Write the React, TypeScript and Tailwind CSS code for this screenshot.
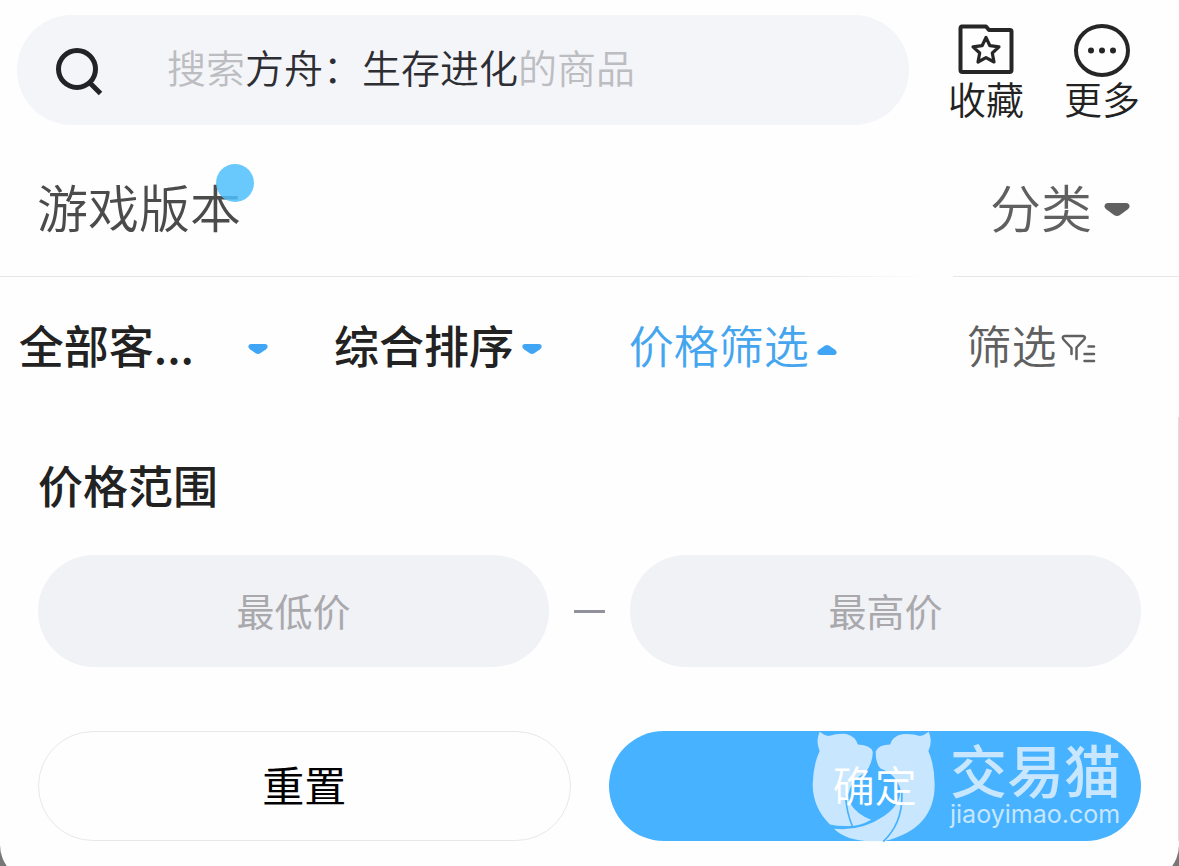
import React from "react";

function Caret({ up = false, className }: { up?: boolean; className: string }) {
  return (
    <svg viewBox="0 0 26 14" className={className} aria-hidden="true">
      <path
        fill="currentColor"
        transform={up ? "rotate(180 13 7)" : undefined}
        d="M4 0H22Q25.500 0 25.500 3.500Q25.500 5 23.500 6.600L16 12Q13 14 10 12L2.500 6.600Q.5 5 .5 3.500Q.5 0 4 0Z"
      />
    </svg>
  );
}

function SearchIcon() {
  return (
    <svg viewBox="0 0 48 50" className="h-[50px] w-12" fill="none" stroke="#202327" strokeWidth="5" aria-hidden="true">
      <circle cx="22" cy="22" r="18.500" />
      <path d="M35 36L45.500 46.500" />
    </svg>
  );
}

function FavoriteIcon() {
  return (
    <svg viewBox="0 0 58 52" className="h-[52px] w-[58px]" fill="none" stroke="#262626" strokeLinejoin="round" aria-hidden="true">
      <path strokeWidth="4" d="M4.500 3.500H29L32 7H53Q54.500 7 54.500 8.500V47Q54.500 49 52.500 49H5.500Q3.500 49 3.500 47V5.500Q3.500 3.500 5.500 3.500Z" />
      <path strokeWidth="3.200" d="M29 14.500L32.900 22.700L42 23.800L35.300 30L37 39L29 34.600L21 39L22.700 30L16 23.800L25.100 22.700Z" />
    </svg>
  );
}

function MoreIcon() {
  return (
    <svg viewBox="0 0 58 54" className="-mb-[2px] h-[54px] w-[58px]" aria-hidden="true">
      <ellipse cx="29" cy="27.500" rx="26" ry="24.500" fill="none" stroke="#262626" strokeWidth="4" />
      <g fill="#262626">
        <circle cx="18" cy="27.500" r="3" />
        <circle cx="29" cy="27.500" r="3" />
        <circle cx="40" cy="27.500" r="3" />
      </g>
    </svg>
  );
}

function FunnelIcon() {
  return (
    <svg viewBox="0 0 36 30" className="mt-2 h-[30px] w-9" fill="none" stroke="currentColor" strokeWidth="2.500" strokeLinecap="round" strokeLinejoin="round" aria-hidden="true">
      <path d="M10.500 20V14L2.500 5.500Q.5 2 4 2H21Q25 2 23.500 5L15.500 13.500V25" />
      <path d="M27.500 12.500H33M23.500 20H33M23.500 27H33" />
    </svg>
  );
}

function CatLogo() {
  return (
    <svg viewBox="22 26 370 332" className="h-[111px] w-[123px]" aria-hidden="true">
      <g fill="#c8e7ff">
        <path d="M45 27Q58 38 72 40Q100 32 125 34Q152 40 160 66Q200 68 205 88Q204 125 182 150Q140 172 131 215Q130 228 134 238Q155 276 200 292Q165 312 130 311Q100 312 76 306Q24 255 24 185Q26 125 45 85Q32 55 45 27Z" />
        <path d="M373 27Q360 38 347 40Q320 32 293 35Q265 40 257 66Q222 66 214 86Q212 120 228 138Q275 155 288 200Q290 245 240 280Q170 328 88 319Q125 355 200 357L240 356Q392 320 391 185Q390 125 372 85Q386 55 373 27Z" />
      </g>
      <g fill="none" stroke="#47b2ff" strokeWidth="5">
        <path d="M123 222Q126 270 144 313" />
        <path d="M292 205Q298 300 236 358" />
      </g>
    </svg>
  );
}

function PriceInput({ label }: { label: string }) {
  return (
    <input
      aria-label={label}
      inputMode="numeric"
      placeholder={label}
      className="h-28 min-w-0 flex-1 rounded-full bg-[#f1f2f6] pb-1 text-center text-[38px] text-[#333] outline-none placeholder:text-[#a9a9ad]"
    />
  );
}

export default function App() {
  return (
    <div className="h-screen overflow-hidden bg-[#777] font-['Noto_Sans_CJK_SC',sans-serif]">
      <main className="rounded-b-[36px] bg-[#fefefe] pb-10">
        <header className="flex items-start pt-[15px] pr-[39px] pl-[17px]">
          <div className="grid h-[110px] flex-1 grid-cols-[150px_1fr] items-center rounded-full bg-[#f4f5f9]">
            <label htmlFor="search" className="pt-1 pl-[38px]" aria-label="搜索">
              <SearchIcon />
            </label>
            <input id="search" type="search" className="col-start-2 row-start-1 h-full min-w-0 rounded-full bg-transparent text-[39px] outline-none" />
            <span className="pointer-events-none col-start-2 row-start-1 pb-2 text-[39px] leading-[56px] font-[350] whitespace-nowrap text-[#bcbdc1]">
              搜索<span className="text-[#2d2e33]">方舟：生存进化</span>的商品
            </span>
          </div>
          <nav className="flex gap-10 pt-2 pl-[39px] text-[38px] leading-[46px] font-[350] text-[#222]">
            <button className="flex flex-col items-center"><FavoriteIcon />收藏</button>
            <button className="flex flex-col items-center"><MoreIcon />更多</button>
          </nav>
        </header>

        <div className="flex items-center justify-between pt-[47px] pr-[49px] pb-9 pl-[37px] text-[51px] leading-[68px] font-[350]">
          <button className="relative text-[#4b4b4b]">
            游戏版本
            <span className="absolute -top-2 -right-[13px] size-[38px] rounded-full bg-[#4fc0fd]/85" />
          </button>
          <button className="flex items-center gap-3 text-[#606060]">
            分类
            <Caret className="mt-2 h-[14px] w-[26px]" />
          </button>
        </div>

        <div className="flex gap-6">
          <div className="h-px flex-1 bg-linear-to-r from-[#e6e6e6] from-85% to-transparent" />
          <div className="h-px w-[226px] bg-[#e6e6e6]" />
        </div>

        <nav className="grid h-[140px] grid-cols-4 text-[45px] leading-[60px] font-[350] whitespace-nowrap">
          <button className="flex items-center justify-center gap-[54px] pr-2 pb-1 font-medium text-[#222]">
            全部客...
            <Caret className="mt-2 h-[11px] w-5 text-[#40a5f5]" />
          </button>
          <button className="flex items-center justify-center gap-2 pr-2 pb-1 font-medium text-[#222]">
            综合排序
            <Caret className="mt-2 h-[11px] w-5 text-[#40a5f5]" />
          </button>
          <button aria-expanded="true" className="flex items-center justify-center gap-2 pr-2 pb-1 text-[#45a5ee]">
            价格筛选
            <Caret up className="mt-2 h-[11px] w-5 text-[#40a5f5]" />
          </button>
          <button className="flex items-center justify-center gap-1 pb-1 text-[#606060]">
            筛选
            <FunnelIcon />
          </button>
        </nav>

        <section className="border-r border-[#ddd] pt-[34px] pr-[37px] pl-[38px]">
          <h2 className="text-[45px] leading-[68px] font-medium text-[#222]">价格范围</h2>
          <div className="mt-9 flex items-center gap-[25px]">
            <PriceInput label="最低价" />
            <span className="h-[3px] w-[31px] bg-[#92929c]" />
            <PriceInput label="最高价" />
          </div>
          <div className="mt-16 grid grid-cols-2 gap-[38px] text-[42px] leading-[60px]">
            <button className="h-[110px] rounded-full border border-[#e8e8e8] pb-1 text-black">重置</button>
            <div className="relative flex">
              <button className="flex-1 rounded-full bg-[#47b2ff] pb-1 text-white">
                <span className="relative z-10 font-[350]">确定</span>
              </button>
              <div className="pointer-events-none absolute inset-y-0 right-5 flex items-center gap-[15px] text-[#c8e7ff]">
                <CatLogo />
                <div className="flex flex-col pb-1">
                  <span className="text-[57px] leading-[60px] font-medium">交易猫</span>
                  <span className="font-['Inter',sans-serif] text-[25px] leading-8">jiaoyimao.com</span>
                </div>
              </div>
            </div>
          </div>
        </section>
      </main>
    </div>
  );
}
